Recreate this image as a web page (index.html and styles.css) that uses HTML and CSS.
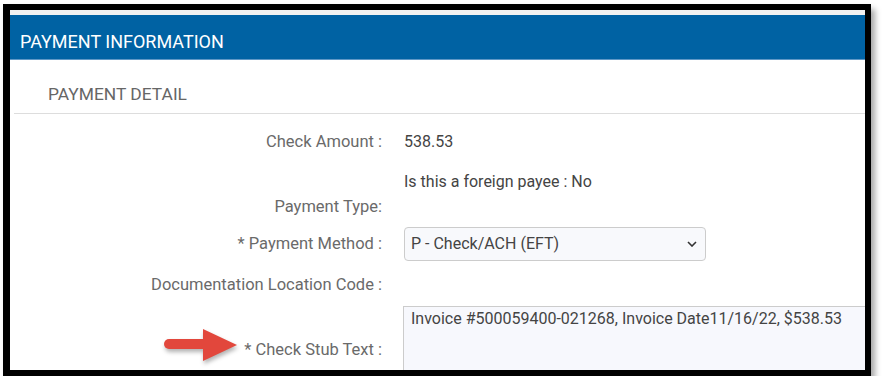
FILE: index.html
```html
<!DOCTYPE html>
<html lang="en">
<head>
    <meta charset="UTF-8">
    <title>Payment Information</title>
    <link rel="stylesheet" href="styles.css">
</head>
<body>

    <div class="frame">
        <div class="panel">
            <div class="panel-head">PAYMENT INFORMATION</div>

            <div class="sub-title">PAYMENT DETAIL</div>

            <div class="form">
                <div class="row row-amount">
                    <div class="label">Check Amount :</div>
                    <div class="value">538.53</div>
                </div>

                <div class="row row-type">
                    <div class="label">Payment Type:</div>
                    <div class="value">Is this a foreign payee : No</div>
                </div>

                <div class="row row-method">
                    <div class="label">* Payment Method :</div>
                    <div class="value">
                        <div class="select">
                            <span>P - Check/ACH (EFT)</span>
                            <svg class="chevron" width="10" height="6" viewBox="0 0 10 6">
                                <path d="M1 1 L5 5 L9 1" fill="none" stroke="#333" stroke-width="1.6"/>
                            </svg>
                        </div>
                    </div>
                </div>

                <div class="row row-doc">
                    <div class="label">Documentation Location Code :</div>
                    <div class="value"></div>
                </div>

                <div class="row row-stub">
                    <div class="label">
                        <svg class="arrow" width="78" height="38" viewBox="0 0 78 38">
                            <rect x="2" y="12" width="44" height="10" rx="5" fill="#e2473c"/>
                            <polygon points="41,2 75,18 41,34" fill="#e2473c"/>
                        </svg>
                        <span>* Check Stub Text :</span>
                    </div>
                    <div class="value">
                        <div class="textarea">Invoice #500059400-021268, Invoice Date11/16/22, $538.53</div>
                    </div>
                </div>
            </div>
        </div>
    </div>

</body>
</html>
```

FILE: styles.css
```css
* { box-sizing: border-box; }
body { margin: 0; background: #fff; font-family: Roboto, 'Liberation Sans', Arial, sans-serif; }

/* CAPTURE FRAME */
.frame {
    width: 868px; height: 372px;
    margin: 4px 0 0 3px;
    border: 6px solid #000; border-left-width: 7px;
    box-shadow: 4px 5px 6px rgba(0,0,0,0.35);
    overflow: hidden;
}

.panel {
    height: 100%; padding-top: 5px;
    background: linear-gradient(#f1f1f1, #f1f1f1) top / 100% 5px no-repeat, #fff;
}

.panel-head {
    height: 45px; background: #0062a3; color: #fff;
    font-size: 18px; padding: 0 10px; line-height: 53px; overflow: hidden;
    border-bottom: 1px solid #5f98c6;
}

.sub-title {
    font-size: 17.4px; color: #666;
    height: 54px; line-height: 68px; overflow: hidden;
    margin-left: 4px; padding-left: 34px; border-bottom: 1px solid #ddd;
}

/* FORM ROWS */
.form { padding-top: 18px; font-size: 16px; }
.row { display: flex; gap: 22px; }
.label { width: 372px; flex-shrink: 0; text-align: right; color: #6a6a6a; line-height: 20px; font-size: 16.5px; }
.value { flex: 1; color: #444; line-height: 20px; }

.row-type { height: 45px; margin-top: 20px; }
.row-type .label { align-self: flex-end; }

.row-method { margin-top: 10px; align-items: center; }
.select {
    width: 302px; height: 34px;
    border: 1px solid #ccc; border-radius: 4px; background: #f8f9fc;
    display: flex; align-items: center; justify-content: space-between;
    padding: 0 8px 0 6px; color: #444;
}

.row-doc { margin-top: 14px; }

.row-stub { margin-top: 11px; align-items: center; }
.row-stub .label { display: flex; justify-content: flex-end; align-items: center; gap: 4px; }
.arrow { margin-top: -8px; filter: drop-shadow(1px 3px 2px rgba(0,0,0,0.3)); }
.textarea {
    height: 88px; margin-left: -1px;
    border: 1px solid #ccc; border-right: 0; background: #f7f8fd;
    padding: 2px 7px; color: #444;
}
```
